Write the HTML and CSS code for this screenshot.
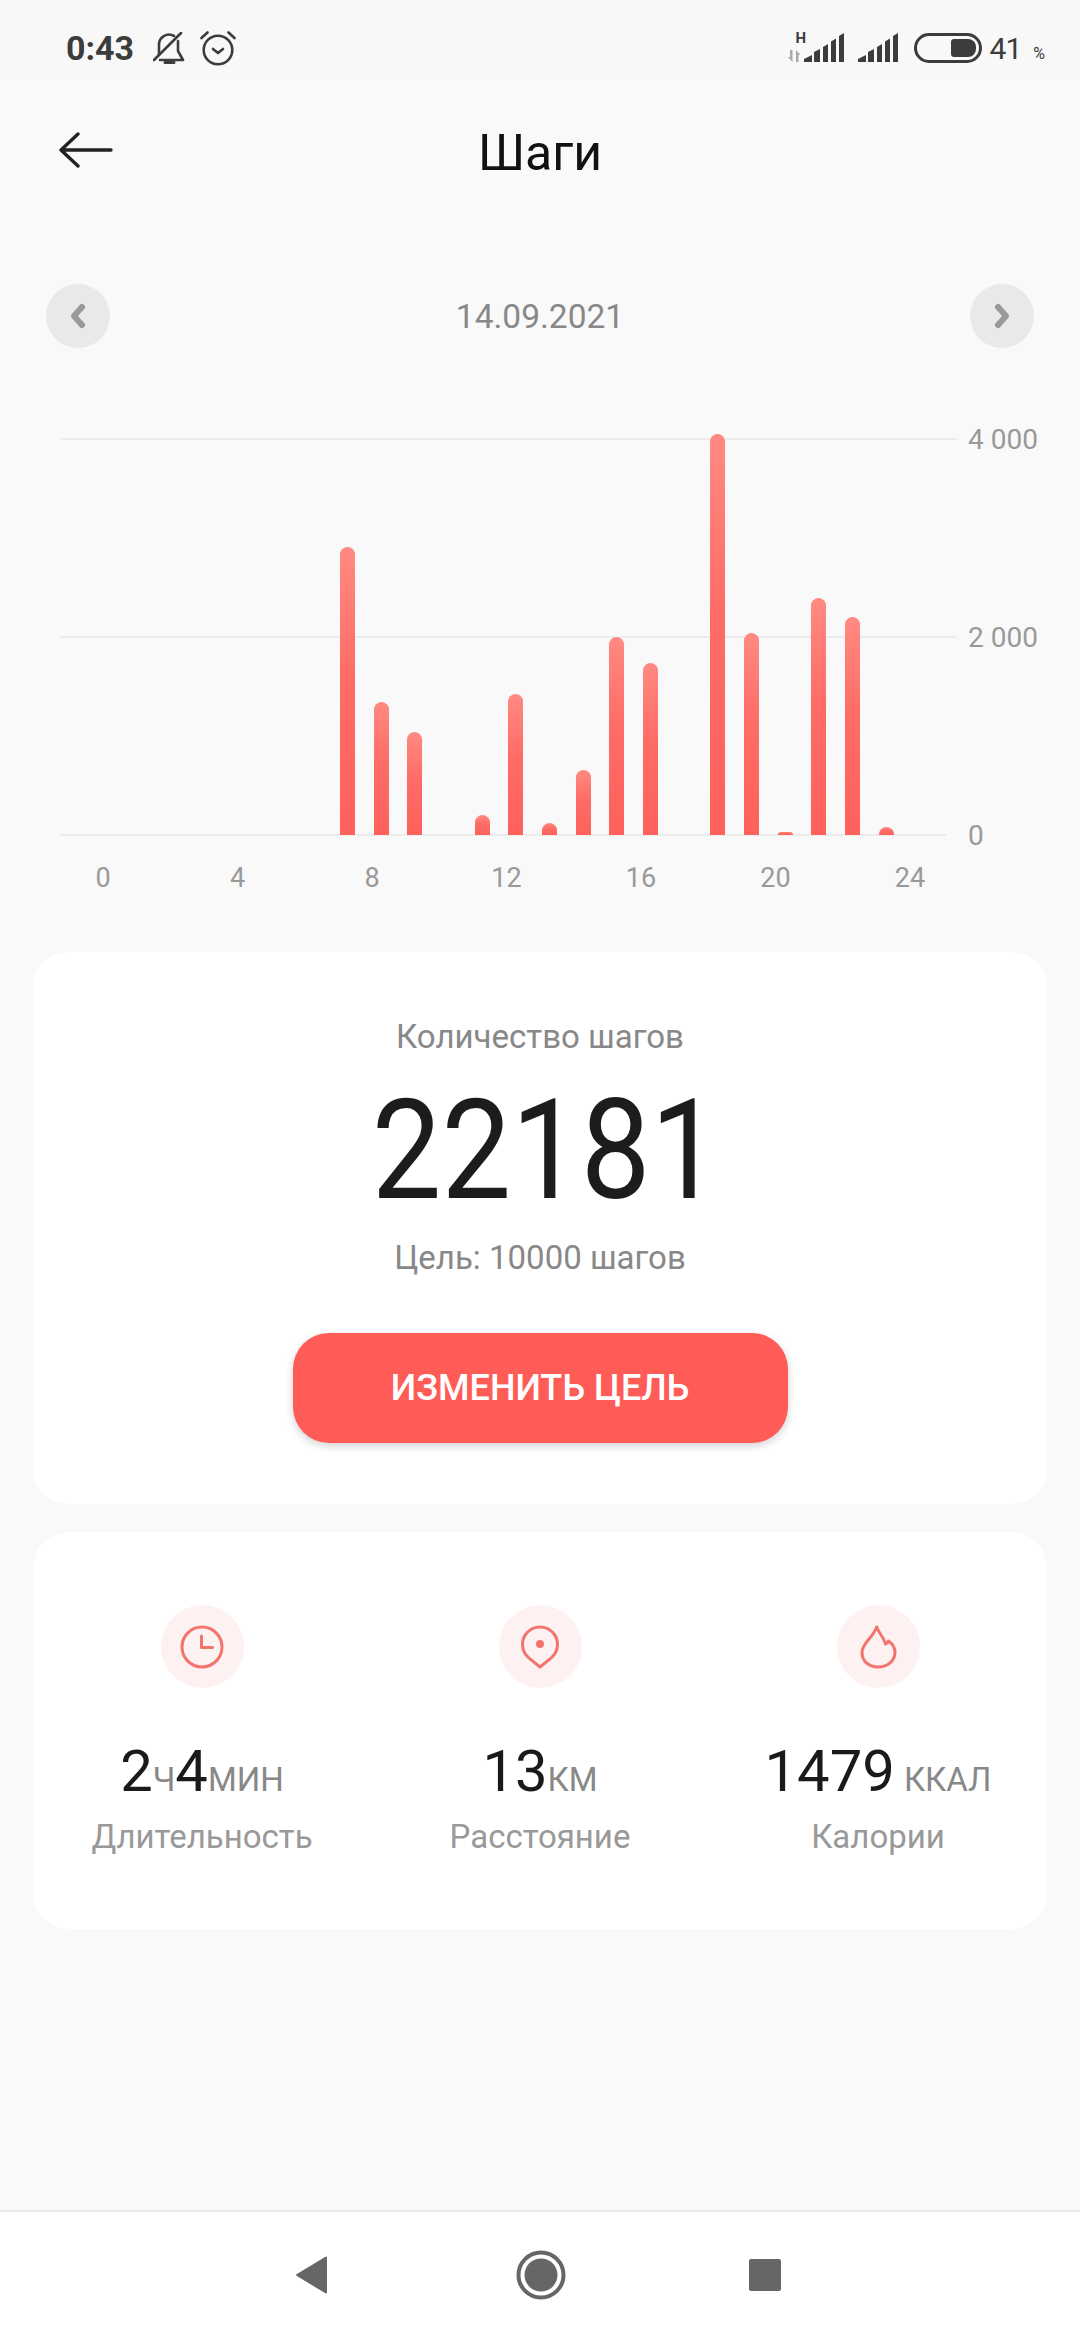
FILE: index.html
```html
<!DOCTYPE html>
<html lang="ru">

<head>
    <meta charset="UTF-8">
    <meta name="viewport" content="width=device-width, initial-scale=1.0">
    <title>Шаги</title>
    <link rel="stylesheet" href="styles.css">
</head>

<body>
    <div class="screen">
        <div class="status">
            <div class="status-left">
                <span class="time">0:43</span>
                <svg class="bell" viewBox="0 0 32 32" width="32" height="32" fill="none" stroke="#3c3c3c" stroke-width="2.6" stroke-linecap="round" stroke-linejoin="round">
                    <path d="M6 23V13a10 10 0 0 1 15-9M25 9v10l5 9H7"/>
                    <path d="M12 30.5h9" stroke-width="3"/>
                    <path d="M1 28L28 1"/>
                </svg>
                <svg class="alarm" viewBox="0 0 36 36" width="36" height="36" fill="none" stroke="#3c3c3c" stroke-width="2.6" stroke-linecap="round" stroke-linejoin="round">
                    <circle cx="18" cy="20" r="14.3"/>
                    <path d="M1.5 8l6-5.5M34.5 8l-6-5.5"/>
                    <path d="M13 19l5 4 5-4"/>
                </svg>
            </div>
            <div class="status-right">
                <div class="signal-first">
                    <span class="net">H</span>
                    <svg viewBox="0 0 58 32" width="58" height="32">
                        <path d="M3 18h2.5v12L1 25h2zM9 30V18l4.5 5h-2v7z" fill="#aaa"/>
                        <path d="M17 30v-3l8-4v7zM27 30V20l6-3v13zM36 30V15l5-3v18zM44 30V9.5l5-3V30zM52 30V4l5-3v29z" fill="#3c3c3c"/>
                    </svg>
                </div>
                <svg class="signal" viewBox="0 0 41 32" width="41" height="32">
                    <path d="M0 30v-3l8-4v7zM10 30V20l6-3v13zM19 30V15l5-3v18zM27 30V9.5l5-3V30zM35 30V4l5-3v29z" fill="#3c3c3c"/>
                </svg>
                <div class="battery"><div class="battery-fill"></div></div>
                <span class="percent">41</span>
                <span class="percent-sign">%</span>
            </div>
        </div>

        <div class="topbar">
            <svg class="back" viewBox="0 0 54 36" width="54" height="36" fill="none" stroke="#222" stroke-width="3.4" stroke-linecap="round" stroke-linejoin="round">
                <path d="M2 18h50M19 2L2 18l17 16"/>
            </svg>
            <h1 class="title">Шаги</h1>
        </div>

        <div class="datebar">
            <div class="round-btn">
                <svg viewBox="0 0 20 28" width="20" height="28" fill="none" stroke="#999" stroke-width="6" stroke-linecap="round" stroke-linejoin="round"><path d="M14 5l-8 9 8 9"/></svg>
            </div>
            <span class="date">14.09.2021</span>
            <div class="round-btn">
                <svg viewBox="0 0 20 28" width="20" height="28" fill="none" stroke="#999" stroke-width="6" stroke-linecap="round" stroke-linejoin="round"><path d="M6 5l8 9-8 9"/></svg>
            </div>
        </div>

        <div class="chart">
            <div class="grid-line"><span class="rule"></span><span class="y-label">4 000</span></div>
            <div class="grid-line"><span class="rule"></span><span class="y-label">2 000</span></div>
            <div class="grid-line base"><span class="rule"></span><span class="y-label">0</span></div>
            <div class="bars" id="bars"></div>
            <div class="x-axis">
                <span>0</span><span>4</span><span>8</span><span>12</span><span>16</span><span>20</span><span>24</span>
            </div>
        </div>

        <div class="card goal">
            <div class="goal-title">Количество шагов</div>
            <div class="goal-count">22181</div>
            <div class="goal-target">Цель: 10000 шагов</div>
            <div class="goal-btn">ИЗМЕНИТЬ ЦЕЛЬ</div>
        </div>

        <div class="card stats">
            <div class="stat">
                <div class="stat-icon">
                    <svg viewBox="0 0 46 46" width="46" height="46" fill="none" stroke="#f2746c" stroke-width="3" stroke-linecap="round" stroke-linejoin="round">
                        <circle cx="23" cy="23" r="20"/><path d="M22.5 12v11.5h11"/>
                    </svg>
                </div>
                <div class="stat-value">2<small>Ч</small>4<small>МИН</small></div>
                <div class="stat-label">Длительность</div>
            </div>
            <div class="stat">
                <div class="stat-icon">
                    <svg viewBox="0 0 46 46" width="46" height="46" fill="none" stroke="#f2746c" stroke-width="3" stroke-linejoin="round">
                        <path d="M23 43L12 34.1A17.5 17.5 0 1 1 34 34.1z"/><circle cx="23" cy="20" r="4" fill="#f2746c" stroke="none"/>
                    </svg>
                </div>
                <div class="stat-value">13<small>КМ</small></div>
                <div class="stat-label">Расстояние</div>
            </div>
            <div class="stat">
                <div class="stat-icon">
                    <svg viewBox="0 0 46 46" width="46" height="46" fill="none" stroke="#f2746c" stroke-width="3" stroke-linejoin="round" stroke-linecap="round">
                        <path d="M21.7 3C24 10 29 13 30.5 20 32 19.5 33 18 33.5 17 37.5 20 40 24 40 28 40 37 32.5 43 23 43 13.5 43 7 37 7 28.5 7 19 18 14 21.7 3z"/>
                    </svg>
                </div>
                <div class="stat-value">1479<small class="spaced">ККАЛ</small></div>
                <div class="stat-label">Калории</div>
            </div>
        </div>

        <div class="spacer"></div>

        <div class="navbar">
            <svg viewBox="0 0 32 38" width="32" height="38"><path d="M30 1.5v35L1 19z" fill="#666" stroke="#666" stroke-width="2" stroke-linejoin="round"/></svg>
            <svg viewBox="0 0 50 50" width="50" height="50"><circle cx="25" cy="25" r="22.5" fill="none" stroke="#666" stroke-width="4"/><circle cx="25" cy="25" r="16.5" fill="#666"/></svg>
            <div class="nav-square"></div>
        </div>
    </div>
    <script>
        // шаги по часам, высота столбика в пикселях (0 = нет столбика)
        const v_hours = [0, 0, 0, 0, 0, 0, 0, 288, 133, 103, 0, 20, 141, 12, 65, 198, 172, 0, 401, 202, 3, 237, 218, 8];
        const v_bars = document.getElementById("bars");

        for (let i = 0; i < v_hours.length; i++) {
            const v_cell = document.createElement("div");
            v_cell.className = "bar-cell";
            if (v_hours[i] > 0) {
                const v_bar = document.createElement("div");
                v_bar.className = "bar";
                v_bar.style.height = v_hours[i] + "px";
                v_cell.appendChild(v_bar);
            }
            v_bars.appendChild(v_cell);
        }
    </script>
</body>

</html>
```

FILE: styles.css
```css
* {
    box-sizing: border-box;
}

body {
    margin: 0;
    background-color: #f9f9f9;
    font-family: Roboto, "Noto Sans", sans-serif;
}

.screen {
    width: 1080px;
    height: 2340px;
    display: flex;
    flex-direction: column;
    overflow: hidden;
}

/* status bar */
.status {
    height: 76px;
    padding: 32px 35px 0 66px;
    display: flex;
    justify-content: space-between;
    align-items: flex-start;
    background-color: #f8f8f8;
}

.status-left,
.status-right {
    height: 32px;
    display: flex;
    align-items: center;
}

.time {
    font-size: 34px;
    font-weight: 700;
    color: #3c3c3c;
    margin-right: 19px;
}

.bell {
    margin-right: 15px;
}

.signal-first {
    position: relative;
    width: 58px;
    height: 32px;
}

.net {
    position: absolute;
    left: 9px;
    top: -2px;
    font-size: 15px;
    line-height: 16px;
    font-weight: 700;
    color: #3c3c3c;
}

.signal {
    margin-left: 13px;
}

.battery {
    width: 68px;
    height: 30px;
    margin-left: 15px;
    border: 3px solid #3c3c3c;
    border-radius: 15px;
    display: flex;
    justify-content: flex-end;
    padding: 3px;
}

.battery-fill {
    width: 25px;
    height: 18px;
    background-color: #3c3c3c;
    border-radius: 3px 8px 8px 3px;
}

.percent {
    font-size: 30px;
    letter-spacing: -1px;
    color: #3c3c3c;
    margin-left: 8px;
}

.percent-sign {
    font-size: 16px;
    color: #3c3c3c;
    margin-left: 12px;
    margin-top: 11px;
}

/* header */
.topbar {
    height: 208px;
    position: relative;
    display: flex;
    justify-content: center;
}

.back {
    position: absolute;
    left: 59px;
    top: 56px;
}

.title {
    margin: 50px 0 0;
    font-size: 50px;
    line-height: 54px;
    font-weight: 400;
    color: #111;
}

.datebar {
    height: 64px;
    padding: 0 46px;
    display: flex;
    justify-content: space-between;
    align-items: center;
}

.round-btn {
    width: 64px;
    height: 64px;
    border-radius: 50%;
    background-color: #e9e9e9;
    display: flex;
    justify-content: center;
    align-items: center;
}

.date {
    font-size: 33.5px;
    color: #888;
}

/* chart */
.chart {
    height: 604px;
    position: relative;
}

.grid-line {
    position: absolute;
    left: 60px;
    right: 0;
    height: 2px;
    display: flex;
    align-items: center;
}

.grid-line:nth-child(1) {
    top: 90px;
}

.grid-line:nth-child(2) {
    top: 288px;
}

.grid-line.base {
    top: 486px;
}

.rule {
    width: 897px;
    height: 2px;
    background-color: #ececec;
}

.base .rule {
    width: 886px;
}

.y-label {
    position: absolute;
    left: 908px;
    font-size: 28px;
    color: #999;
    white-space: nowrap;
}

.bars {
    position: absolute;
    left: 95px;
    top: 80px;
    width: 808px;
    height: 407px;
    display: flex;
    align-items: flex-end;
}

.bar-cell {
    flex: 1;
    display: flex;
    justify-content: center;
}

.bar {
    width: 15px;
    border-radius: 8px 8px 0 0;
    background: linear-gradient(#ff8a82, #ff6c66 45%, #ff615c);
}

.x-axis {
    position: absolute;
    left: 103px;
    top: 514px;
    width: 807px;
    display: flex;
    justify-content: space-between;
    font-size: 27px;
    color: #999;
}

.x-axis span {
    width: 0;
    display: flex;
    justify-content: center;
}

/* cards */
.card {
    width: 1014px;
    margin: 0 33px;
    background-color: #fff;
    border-radius: 36px;
}

.goal {
    height: 552px;
    padding-top: 65px;
    display: flex;
    flex-direction: column;
    align-items: center;
}

.goal-title,
.goal-target {
    font-size: 33px;
    line-height: 40px;
    color: #888;
}

.goal-count {
    font-size: 124px;
    line-height: 150px;
    font-weight: 400;
    color: #1c1c1c;
    margin: 19px 0 0 12px;
    /* цифры в оригинале уже и выше, чем в Roboto */
    transform: scaleY(1.12);
}

.goal-target {
    margin-top: 12px;
}

.goal-btn {
    width: 495px;
    height: 110px;
    margin-top: 55px;
    border-radius: 36px;
    background-color: #ff5c58;
    box-shadow: 0 3px 8px rgba(0, 0, 0, 0.18);
    color: #fff;
    font-size: 36px;
    font-weight: 500;
    display: flex;
    justify-content: center;
    align-items: center;
}

.stats {
    height: 397px;
    margin-top: 28px;
    padding-top: 73px;
    display: flex;
}

.stat {
    flex: 1;
    display: flex;
    flex-direction: column;
    align-items: center;
}

.stat-icon {
    width: 83px;
    height: 83px;
    border-radius: 50%;
    background-color: #fdf2f1;
    display: flex;
    justify-content: center;
    align-items: center;
}

.stat-value {
    margin-top: 48px;
    font-size: 58px;
    line-height: 70px;
    color: #1a1a1a;
}

.stat-value small {
    font-size: 33px;
    color: #888;
}

.stat-value .spaced {
    margin-left: 9px;
}

.stat-label {
    font-size: 33px;
    line-height: 44px;
    color: #999;
}

.spacer {
    flex: 1;
}

/* bottom navigation */
.navbar {
    height: 130px;
    border-top: 2px solid #e8e8e8;
    background-color: #fff;
    padding: 0 0 2px 296px;
    display: flex;
    align-items: center;
}

.navbar svg:nth-child(2) {
    margin-left: 188px;
}

.nav-square {
    width: 32px;
    height: 32px;
    margin-left: 183px;
    background-color: #666;
    border-radius: 2px;
}
```
